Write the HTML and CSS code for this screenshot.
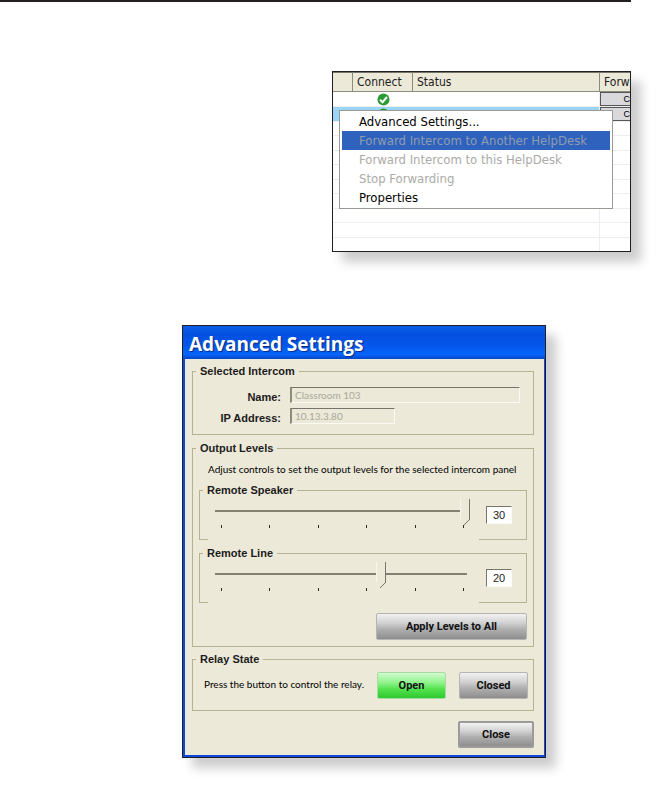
FILE: index.html
```html
<!DOCTYPE html>
<html lang="en">
<head>
  <meta charset="UTF-8">
  <meta name="viewport" content="width=device-width, initial-scale=1.0">
  <title>Advanced Settings</title>
  <link rel="stylesheet" href="styles.css">
</head>
<body>
  <hr class="rule">

  <section class="panel-list">
    <table class="grid">
      <thead>
        <tr>
          <th class="col-mark"></th>
          <th class="col-connect">Connect</th>
          <th>Status</th>
          <th class="col-forward">Forw</th>
        </tr>
      </thead>
      <tbody>
        <tr>
          <td></td>
          <td class="state">
            <svg width="13" height="13" viewBox="0 0 13 13">
              <circle cx="6.5" cy="6.5" r="6" fill="#2a9a35"/>
              <path d="M3 6.6l2.5 2.6L10 4" fill="none" stroke="#fff" stroke-width="2"/>
            </svg>
          </td>
          <td></td>
          <td class="forward"><button type="button">C</button></td>
        </tr>
        <tr class="selected">
          <td></td>
          <td class="state">
            <svg width="13" height="13" viewBox="0 0 13 13">
              <circle cx="6.5" cy="6.5" r="6" fill="#2a9a35"/>
              <path d="M3 6.6l2.5 2.6L10 4" fill="none" stroke="#fff" stroke-width="2"/>
            </svg>
          </td>
          <td></td>
          <td class="forward"><button type="button">C</button></td>
        </tr>
        <tr><td></td><td></td><td></td><td></td></tr>
        <tr><td></td><td></td><td></td><td></td></tr>
        <tr><td></td><td></td><td></td><td></td></tr>
        <tr><td></td><td></td><td></td><td></td></tr>
        <tr><td></td><td></td><td></td><td></td></tr>
        <tr><td></td><td></td><td></td><td></td></tr>
        <tr><td></td><td></td><td></td><td></td></tr>
        <tr><td></td><td></td><td></td><td></td></tr>
        <tr class="last"><td></td><td></td><td></td><td></td></tr>
      </tbody>
    </table>

    <div class="menu">
      <button type="button">Advanced Settings...</button>
      <button type="button" class="active" disabled>Forward Intercom to Another HelpDesk</button>
      <button type="button" disabled>Forward Intercom to this HelpDesk</button>
      <button type="button" disabled>Stop Forwarding</button>
      <button type="button">Properties</button>
    </div>
  </section>

  <form class="dialog">
    <h1>Advanced Settings</h1>
    <div class="content">
      <fieldset class="intercom">
        <legend>Selected Intercom</legend>
        <div class="field">
          <label for="name">Name:</label>
          <input type="text" id="name" class="wide" value="Classroom 103" disabled>
        </div>
        <div class="field">
          <label for="ip">IP Address:</label>
          <input type="text" id="ip" value="10.13.3.80" disabled>
        </div>
      </fieldset>

      <fieldset class="output">
        <legend>Output Levels</legend>
        <p>Adjust controls to set the output levels for the selected intercom panel</p>

        <fieldset class="level">
          <legend>Remote Speaker</legend>
          <div class="level-row">
            <div class="slider">
              <input type="range" id="speaker" min="0" max="30" value="30" aria-label="Remote Speaker">
              <div class="ticks"><i></i><i></i><i></i><i></i><i></i><i></i></div>
            </div>
            <input type="text" class="value" value="30" aria-label="Remote Speaker level">
          </div>
        </fieldset>

        <fieldset class="level">
          <legend>Remote Line</legend>
          <div class="level-row">
            <div class="slider">
              <input type="range" id="line" min="0" max="30" value="20" aria-label="Remote Line">
              <div class="ticks"><i></i><i></i><i></i><i></i><i></i><i></i></div>
            </div>
            <input type="text" class="value" value="20" aria-label="Remote Line level">
          </div>
        </fieldset>

        <div class="actions">
          <button type="button" class="btn apply">Apply Levels to All</button>
        </div>
      </fieldset>

      <fieldset class="relay">
        <legend>Relay State</legend>
        <div class="relay-row">
          <p>Press the button to control the relay.</p>
          <button type="button" class="btn open">Open</button>
          <button type="button" class="btn">Closed</button>
        </div>
      </fieldset>

      <div class="footer">
        <button type="button" class="btn close">Close</button>
      </div>
    </div>
  </form>

  <script>
    // keep the number boxes in step with the sliders
    document.querySelectorAll(".level-row").forEach(function(row) {
      const range = row.querySelector("input[type=range]");
      const value = row.querySelector(".value");
      range.addEventListener("input", function() {
        value.value = range.value;
      });
    });
  </script>
</body>
</html>
```

FILE: styles.css
```css
* {
  box-sizing: border-box;
}

body {
  margin: 0;
  background-color: white;
  font-family: "Liberation Sans", Arial, sans-serif;
  font-size: 11px;
  color: #1c1c1c;
}

.rule {
  height: 2px;
  margin: 0 29px 69px 0;
  border: none;
  background-color: #231f20;
}

/* intercom list */
.panel-list {
  position: relative;
  margin: 0 29px 73px 332px;
  border: 1px solid #231f20;
  box-shadow: 10px 10px 10px rgba(0, 0, 0, 0.2);
  font-family: "DejaVu Sans Condensed", "DejaVu Sans", sans-serif;
}

.grid {
  width: 100%;
  table-layout: fixed;
  border-collapse: separate;
  border-spacing: 0;
}

.grid th {
  height: 20px;
  padding: 0 0 0 4px;
  border-top: 1px solid #77756a;
  border-right: 1px solid #8d8b7c;
  border-bottom: 1px solid #8d8b7c;
  background-color: #ece9d8;
  font-size: 12px;
  font-weight: normal;
  text-align: left;
}

.grid th:last-child {
  border-right: none;
}

.col-mark {
  width: 20px;
}

.col-connect {
  width: 60px;
}

.col-forward {
  width: 30px;
  overflow: hidden;
}

.grid td {
  height: 15px;
  padding: 0;
  border-bottom: 1px solid #eeeeec;
  line-height: 1px;
}

.grid tr:nth-child(odd) td {
  height: 14px;
}

.grid td:nth-child(3) {
  border-right: 1px solid #eeeeec;
}

.grid .state {
  text-align: center;
}

.grid .selected td {
  background-color: #9bd5f5;
}

.grid tr.last td {
  height: 13px;
  border-bottom: none;
}

.forward button {
  display: block;
  width: 100%;
  height: 14px;
  padding: 0;
  border: 1px solid #55555a;
  border-right: none;
  background-color: #d9d9dc;
  font-size: 9px;
  line-height: 12px;
  text-align: right;
}

.menu {
  position: absolute;
  top: 38px;
  left: 6px;
  right: 17px;
  padding: 1px 2px;
  border: 1px solid #9a9a94;
  background-color: white;
}

.menu button {
  display: block;
  width: 100%;
  height: 19px;
  padding: 0 0 0 17px;
  border: none;
  background: none;
  color: black;
  font-family: inherit;
  font-size: 13px;
  line-height: 19px;
  text-align: left;
  white-space: nowrap;
}

.menu button:disabled {
  color: #aaaaa6;
}

.menu .active {
  background-color: #2f62bd;
}

.menu .active:disabled {
  color: #8f9cae;
}

/* settings dialog */
.dialog {
  margin: 0 114px 28px 182px;
  border: 1px solid #231f20;
  background-color: #ece9d8;
  box-shadow: 10px 10px 10px rgba(0, 0, 0, 0.2);
}

.dialog h1 {
  height: 33px;
  margin: 0;
  padding-left: 6px;
  background: linear-gradient(#0a5fe8, #0450e0 25%, #0456ea 60%, #0566ff 85%, #0447c8);
  color: white;
  font-family: "Open Sans", sans-serif;
  font-size: 19px;
  font-weight: bold;
  line-height: 36px;
  text-shadow: 1px 1px 1px #0a2a80;
}

.content {
  padding: 5px 10px 7px 7px;
  border: 2px solid #0b48e0;
  border-top: none;
  border-right-width: 1px;
}

fieldset {
  min-width: 0;
  margin: 0;
  padding: 0;
  border: 1px solid #b5b292;
}

legend {
  margin-left: 3px;
  padding: 0 4px;
  height: 14px;
  font-weight: bold;
  line-height: 14px;
}

.dialog p {
  margin: 0;
  font-family: Lato, sans-serif;
  font-size: 10px;
  color: black;
}

.intercom {
  padding: 9px 0 10px;
  margin-bottom: 6px;
}

.field {
  display: flex;
  gap: 9px;
}

.field + .field {
  margin-top: 5px;
}

.field label {
  width: 88px;
  font-weight: bold;
  line-height: 20px;
  height: 16px;
  text-align: right;
}

.field input {
  width: 105px;
  height: 16px;
  padding: 0 3px;
  border: 1px solid #fbfaf3;
  border-top: 1px solid #77756a;
  border-left: 2px solid #8d8b7c;
  background-color: #ece9d8;
  color: #aaa898;
  font-family: Lato, sans-serif;
  font-size: 10px;
}

.field .wide {
  flex: 1;
  width: auto;
  margin-right: 13px;
}

.output {
  padding: 0 6px 6px;
  margin-bottom: 5px;
}

.output > legend,
.relay > legend {
  margin-left: -3px;
}

.output p {
  margin: 6px 0 6px 9px;
  line-height: 16px;
  white-space: nowrap;
}

.output .level {
  margin-bottom: 6px;
}

.level-row {
  display: flex;
  align-items: flex-start;
}

/* covers the bottom edge of the group box */
.slider {
  flex: 1;
  margin: 0 7px -1px 8px;
  padding: 2px 9px 12px 0;
  background-color: #ece9d8;
}

.slider input {
  display: block;
  width: 100%;
  height: 26px;
  margin: 0;
  appearance: none;
  background: none;
}

.slider input::-webkit-slider-runnable-track {
  height: 26px;
  background: linear-gradient(#838171, #838171) no-repeat 7px 11px / calc(100% - 10px) 2px;
}

.slider input::-webkit-slider-thumb {
  appearance: none;
  width: 10px;
  height: 26px;
  background:
    linear-gradient(#77756a, #77756a) no-repeat 9px 0 / 1px 20px,
    linear-gradient(135deg, #ece9d8 46%, #77756a 47%, #77756a 56%, #ece9d8 57%) no-repeat 4px 20px / 6px 6px,
    linear-gradient(#f8f6ec, #f8f6ec) no-repeat 0 0 / 1px 20px,
    #ece9d8;
}

.ticks {
  display: flex;
  justify-content: space-between;
  margin: 0 6px 0 13px;
}

.ticks i {
  width: 1px;
  height: 3px;
  background-color: #2b2a24;
}

.value {
  width: 26px;
  height: 18px;
  margin: 9px 14px 0 0;
  padding: 0;
  border: 1px solid #fbfaf3;
  border-top: 1px solid #77756a;
  border-left: 1px solid #77756a;
  background-color: white;
  color: #1c1c1c;
  font-family: inherit;
  font-size: 11px;
  text-align: center;
}

.actions {
  display: flex;
  justify-content: flex-end;
  margin-top: 10px;
}

.btn {
  flex-shrink: 0;
  width: 69px;
  height: 27px;
  padding: 0;
  border: 1px solid #b4b4b4;
  border-radius: 2px;
  background: linear-gradient(#f2f2f2, #d2d2d2 35%, #b0b0b0 60%, #8e8e8e);
  color: #111;
  font-family: Roboto, sans-serif;
  font-size: 11px;
  font-weight: bold;
}

.apply {
  width: 151px;
}

.open {
  border-color: #a8dba4;
  background: linear-gradient(#d2fbcf, #8df288 40%, #52e24e 65%, #2fc92f);
}

.relay {
  padding: 0 6px 11px;
}

.relay-row {
  display: flex;
  gap: 13px;
  margin-top: 6px;
}

.relay-row p {
  flex: 1;
  padding-left: 5px;
  line-height: 24px;
  white-space: nowrap;
}

.footer {
  display: flex;
  justify-content: flex-end;
  margin-top: 10px;
}

.close {
  width: 76px;
  border: 2px solid #9b9b9b;
}
```
